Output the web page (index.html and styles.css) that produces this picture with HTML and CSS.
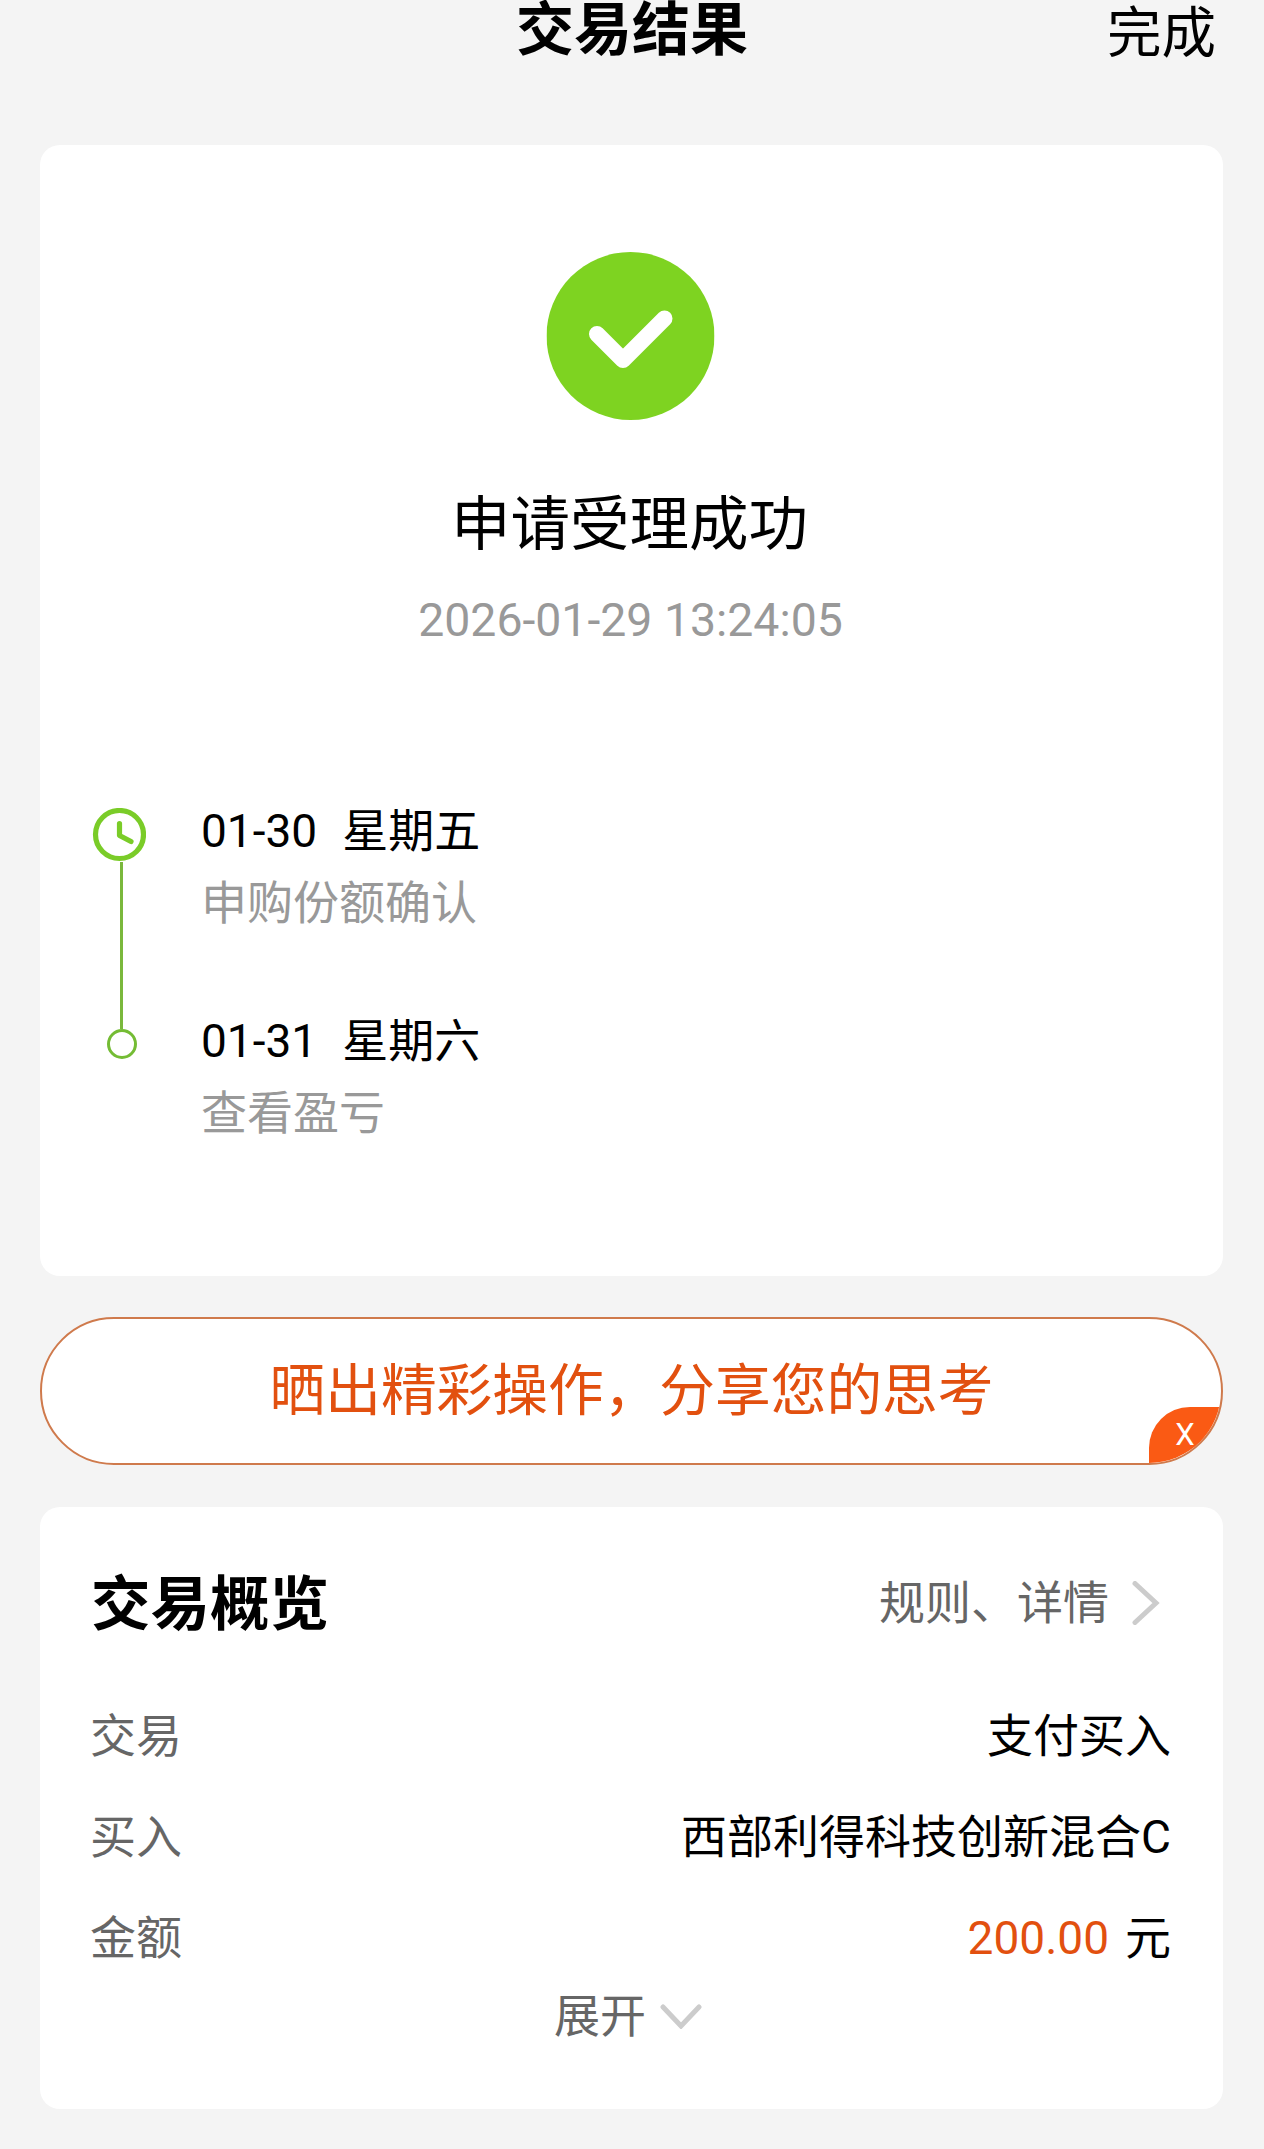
FILE: index.html
```html
<!DOCTYPE html>
<html lang="zh-CN">
<head>
    <meta charset="UTF-8">
    <meta name="viewport" content="width=device-width, initial-scale=1.0">
    <title>交易结果</title>
    <link rel="stylesheet" href="styles.css">
</head>
<body>
    <header class="header">
        <h1>交易结果</h1>
        <a class="done">完成</a>
    </header>

    <section class="card result">
        <svg class="success-icon" viewBox="0 0 168 168">
            <circle cx="84" cy="84" r="84" fill="#7ed321"/>
            <path d="M50.5 82 L76.5 108 L118 66.5" fill="none" stroke="#fff" stroke-width="16" stroke-linecap="round" stroke-linejoin="round"/>
        </svg>
        <h2 class="result-title">申请受理成功</h2>
        <p class="result-time">2026-01-29 13:24:05</p>

        <div class="timeline">
            <div class="track">
                <svg class="clock" viewBox="0 0 54 54">
                    <circle cx="27.5" cy="26.5" r="24" fill="none" stroke="#7acc28" stroke-width="5.2"/>
                    <path d="M27.5 15.5 V27.5 L39 33.5" fill="none" stroke="#7acc28" stroke-width="5.2" stroke-linecap="round" stroke-linejoin="round"/>
                </svg>
                <div class="line"></div>
                <div class="dot"></div>
            </div>
            <div class="steps">
                <div class="step">
                    <div class="step-date"><span>01-30</span><span>星期五</span></div>
                    <div class="step-text">申购份额确认</div>
                </div>
                <div class="step">
                    <div class="step-date"><span>01-31</span><span>星期六</span></div>
                    <div class="step-text">查看盈亏</div>
                </div>
            </div>
        </div>
    </section>

    <div class="share">
        <span>晒出精彩操作，分享您的思考</span>
        <div class="share-close">X</div>
    </div>

    <section class="card overview">
        <div class="overview-head">
            <h2>交易概览</h2>
            <a class="rules">规则、详情
                <svg class="chevron-right" viewBox="0 0 28 44">
                    <path d="M3 2.5 L24 22 L3 41.5" fill="none" stroke="#ccc" stroke-width="5" stroke-linecap="round"/>
                </svg>
            </a>
        </div>
        <div class="row">
            <span class="label">交易</span>
            <span>支付买入</span>
        </div>
        <div class="row">
            <span class="label">买入</span>
            <span>西部利得科技创新混合C</span>
        </div>
        <div class="row">
            <span class="label">金额</span>
            <span class="value"><span class="amount">200.00</span><span>元</span></span>
        </div>
        <div class="expand">展开
            <svg class="chevron-down" viewBox="0 0 42 26">
                <path d="M3 4 L21 23 L39 4" fill="none" stroke="#ccc" stroke-width="5" stroke-linecap="round"/>
            </svg>
        </div>
    </section>
</body>
</html>
```

FILE: styles.css
```css
* {
    margin: 0;
    padding: 0;
    box-sizing: border-box;
}

body {
    font-family: Roboto, "Noto Sans CJK SC", sans-serif;
    font-size: 46px;
    line-height: 60px;
    background: #f4f4f4;
    color: #000;
    min-height: 2149px;
    padding: 0 41px 40px 40px;
}

.header {
    display: grid;
    grid-template-columns: 1fr auto 1fr;
    height: 145px;
}

.header h1 {
    grid-column: 2;
    padding-left: 1px;
    font-size: 58px;
    font-weight: 700;
}

.done {
    justify-self: end;
    padding: 3px 7px 0 0;
    font-size: 54.5px;
}

.card {
    background: #fff;
    border-radius: 20px;
}

.result {
    height: 1131px;
    padding-top: 107px;
}

.success-icon {
    display: block;
    width: 168px;
    height: 168px;
    margin: 0 auto;
    transform: translateX(-1.5px);
}

.result-title {
    margin-top: 75px;
    padding-right: 4px;
    font-size: 59.5px;
    font-weight: 400;
    text-align: center;
}

.result-time {
    margin-top: 35px;
    padding-right: 2px;
    color: #999;
    font-size: 46.4px;
    text-align: center;
}

.timeline {
    display: flex;
    gap: 55px;
    margin-top: 151px;
    padding-left: 52px;
}

.track {
    display: flex;
    flex-direction: column;
    align-items: center;
    width: 54px;
    padding-top: 7px;
}

.clock {
    width: 54px;
    height: 54px;
}

.line {
    width: 3px;
    height: 167px;
    margin-left: 5px;
    background: #7ab83c;
}

.dot {
    width: 30px;
    height: 30px;
    margin-left: 6px;
    border: 3px solid #74bc34;
    border-radius: 50%;
}

.step {
    height: 210px;
}

.step-date {
    display: flex;
    gap: 25px;
    font-size: 46px;
}

.step-text {
    margin-top: 12px;
    color: #999;
}

.share {
    position: relative;
    display: flex;
    align-items: center;
    justify-content: center;
    height: 148px;
    margin: 41px 0 42px;
    overflow: hidden;
    background: #fff;
    border: 2px solid #cf7a4c;
    border-radius: 74px;
    color: #e2500f;
    font-size: 55.7px;
}

/* close tab, clipped by the rounded corner of the bar */
.share-close {
    position: absolute;
    right: 0;
    bottom: 0;
    width: 72px;
    height: 56px;
    background: #fa5a14;
    border-top-left-radius: 41px;
    color: #fff;
    font-size: 31px;
    line-height: 55px;
    text-align: center;
}

.overview {
    height: 602px;
    padding: 68px 52px 0 50px;
}

.overview-head {
    display: flex;
    justify-content: space-between;
    margin-bottom: 71px;
}

.overview-head h2 {
    padding-left: 1px;
    font-size: 59.5px;
    font-weight: 700;
}

.rules {
    display: flex;
    align-items: center;
    gap: 23px;
    height: 56px;
    margin-right: 11px;
    color: #666;
}

.chevron-right {
    width: 28px;
    height: 44px;
}

.row {
    display: flex;
    justify-content: space-between;
    margin-bottom: 41px;
}

.label {
    color: #666;
}

.value {
    display: flex;
    gap: 16px;
}

.amount {
    color: #e2500f;
}

.expand {
    display: flex;
    align-items: center;
    justify-content: center;
    gap: 14px;
    margin-top: -23px;
    padding-right: 5px;
    color: #666;
}

.chevron-down {
    width: 42px;
    height: 26px;
}
```
